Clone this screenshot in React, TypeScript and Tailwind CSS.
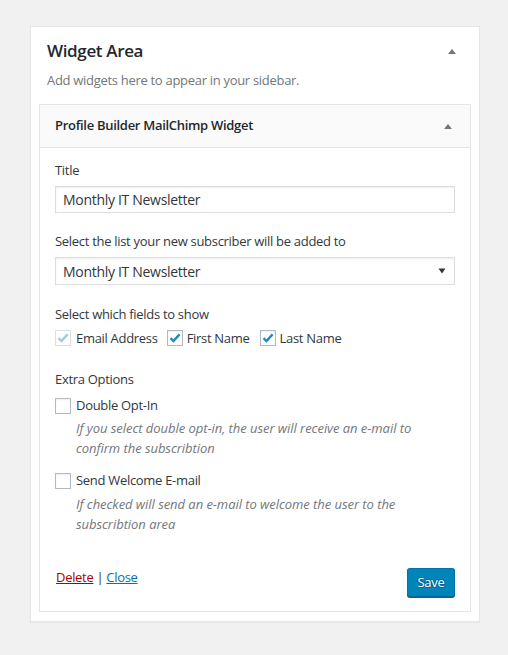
import React from "react";

const font = { fontFamily: '"Open Sans", "Noto Sans", Arial, sans-serif' };

function UpArrow() {
  return (
    <svg width="10" height="6" viewBox="0 0 10 6" className="block">
      <path d="M1 6 L5 1 L9 6 Z" fill="#72777c" />
    </svg>
  );
}

function Check({ color }: { color: string }) {
  return (
    <svg width="14" height="14" viewBox="0 0 14 14" className="block">
      <path d="M2.5 7.2 L5.4 10 L11.6 3.4" fill="none" stroke={color} strokeWidth="2.4" />
    </svg>
  );
}

function Box({ checked, disabled }: { checked?: boolean; disabled?: boolean }) {
  return (
    <span
      className={
        "flex h-4 w-4 shrink-0 items-center justify-center border " +
        (disabled ? "border-[#dcdfe2] bg-[#fdfdfd]" : "border-[#b4b9be] bg-white shadow-[inset_0_1px_2px_rgba(0,0,0,0.07)]")
      }
    >
      {checked ? <Check color={disabled ? "#a6cbe0" : "#1e8cbe"} /> : null}
    </span>
  );
}

export default function App() {
  return (
    <div className="min-h-[655px] w-[508px] bg-[#f1f1f1] pt-[26px] text-[13px] tracking-[-0.3px] text-[#23282d]" style={font}>
      <div className="ml-[30px] w-[450px] border border-[#e5e5e5] bg-white pb-[9px] shadow-[0_1px_1px_rgba(0,0,0,0.04)]">
        <div className="flex items-start justify-between pl-[16px] pr-[22px] pt-[12px]">
          <div className="text-[17px] font-semibold leading-[24px] tracking-[-0.35px] text-[#23282d]">Widget Area</div>
          <div className="pt-[9px]">
            <UpArrow />
          </div>
        </div>
        <div className="mt-[7px] pl-[16px] leading-[20px] text-[#72777c]">Add widgets here to appear in your sidebar.</div>

        <div className="mx-[8px] mt-[14px] border border-[#e5e5e5] bg-white">
          <div className="flex h-[43px] items-center justify-between border-b border-[#e5e5e5] bg-[#fafafa] pl-[15px] pr-[17px]">
            <div className="font-semibold text-[#23282d]">Profile Builder MailChimp Widget</div>
            <UpArrow />
          </div>

          <div className="px-[15px] pb-[14px] pt-[12px] text-[#32373c]">
            <div className="leading-[20px]">Title</div>
            <div className="mt-[6px] flex h-[27px] items-center border border-[#ddd] bg-white px-[7px] text-[14px] shadow-[inset_0_1px_2px_rgba(0,0,0,0.07)]">
              Monthly IT Newsletter
            </div>

            <div className="mt-[18px] leading-[20px]">Select the list your new subscriber will be added to</div>
            <div className="mt-[6px] flex h-[28px] items-center justify-between border border-[#ddd] bg-white pl-[7px] pr-[8px] text-[14px] shadow-[inset_0_1px_2px_rgba(0,0,0,0.07)]">
              <span>Monthly IT Newsletter</span>
              <svg width="8" height="6" viewBox="0 0 8 6" className="block">
                <path d="M0.5 0.5 L7.5 0.5 L4 5.5 Z" fill="#32373c" />
              </svg>
            </div>

            <div className="mt-[19px] leading-[20px]">Select which fields to show</div>
            <div className="mt-[4px] flex h-[20px] items-center leading-[20px]">
              <Box checked disabled />
              <span className="ml-[5px] mr-[9px]">Email Address</span>
              <Box checked />
              <span className="ml-[4px] mr-[10px]">First Name</span>
              <Box checked />
              <span className="ml-[4px]">Last Name</span>
            </div>

            <div className="mt-[21px] leading-[20px]">Extra Options</div>
            <div className="mt-[7px] flex h-[20px] items-center">
              <Box />
              <span className="ml-[5px]">Double Opt-In</span>
            </div>
            <div className="mt-[2px] pl-[21px] italic leading-[20px] tracking-[-0.05px] text-[#72777c]">
              If you select double opt-in, the user will receive an e-mail to confirm the subscribtion
            </div>

            <div className="mt-[13px] flex h-[20px] items-center">
              <Box />
              <span className="ml-[5px]">Send Welcome E-mail</span>
            </div>
            <div className="mt-[3px] pl-[21px] italic leading-[20px] tracking-[-0.05px] text-[#72777c]">
              If checked will send an e-mail to welcome the user to the subscribtion area
            </div>

            <div className="mt-[34px] flex items-start justify-between">
              <div className="flex pl-[1px] leading-[18px]">
                <span className="text-[#a00] underline">Delete</span>
                <span className="mx-[3px] text-[#32373c]">|</span>
                <span className="text-[#0073aa] underline">Close</span>
              </div>
              <button className="h-[29px] w-[48px] rounded-[3px] border border-[#0073aa] border-b-[#006799] bg-[#0085ba] text-[13px] text-white shadow-[0_1px_0_#006799] [text-shadow:0_-1px_1px_#006799,1px_0_1px_#006799,0_1px_1px_#006799,-1px_0_1px_#006799]">
                Save
              </button>
            </div>
          </div>
        </div>
      </div>
    </div>
  );
}
